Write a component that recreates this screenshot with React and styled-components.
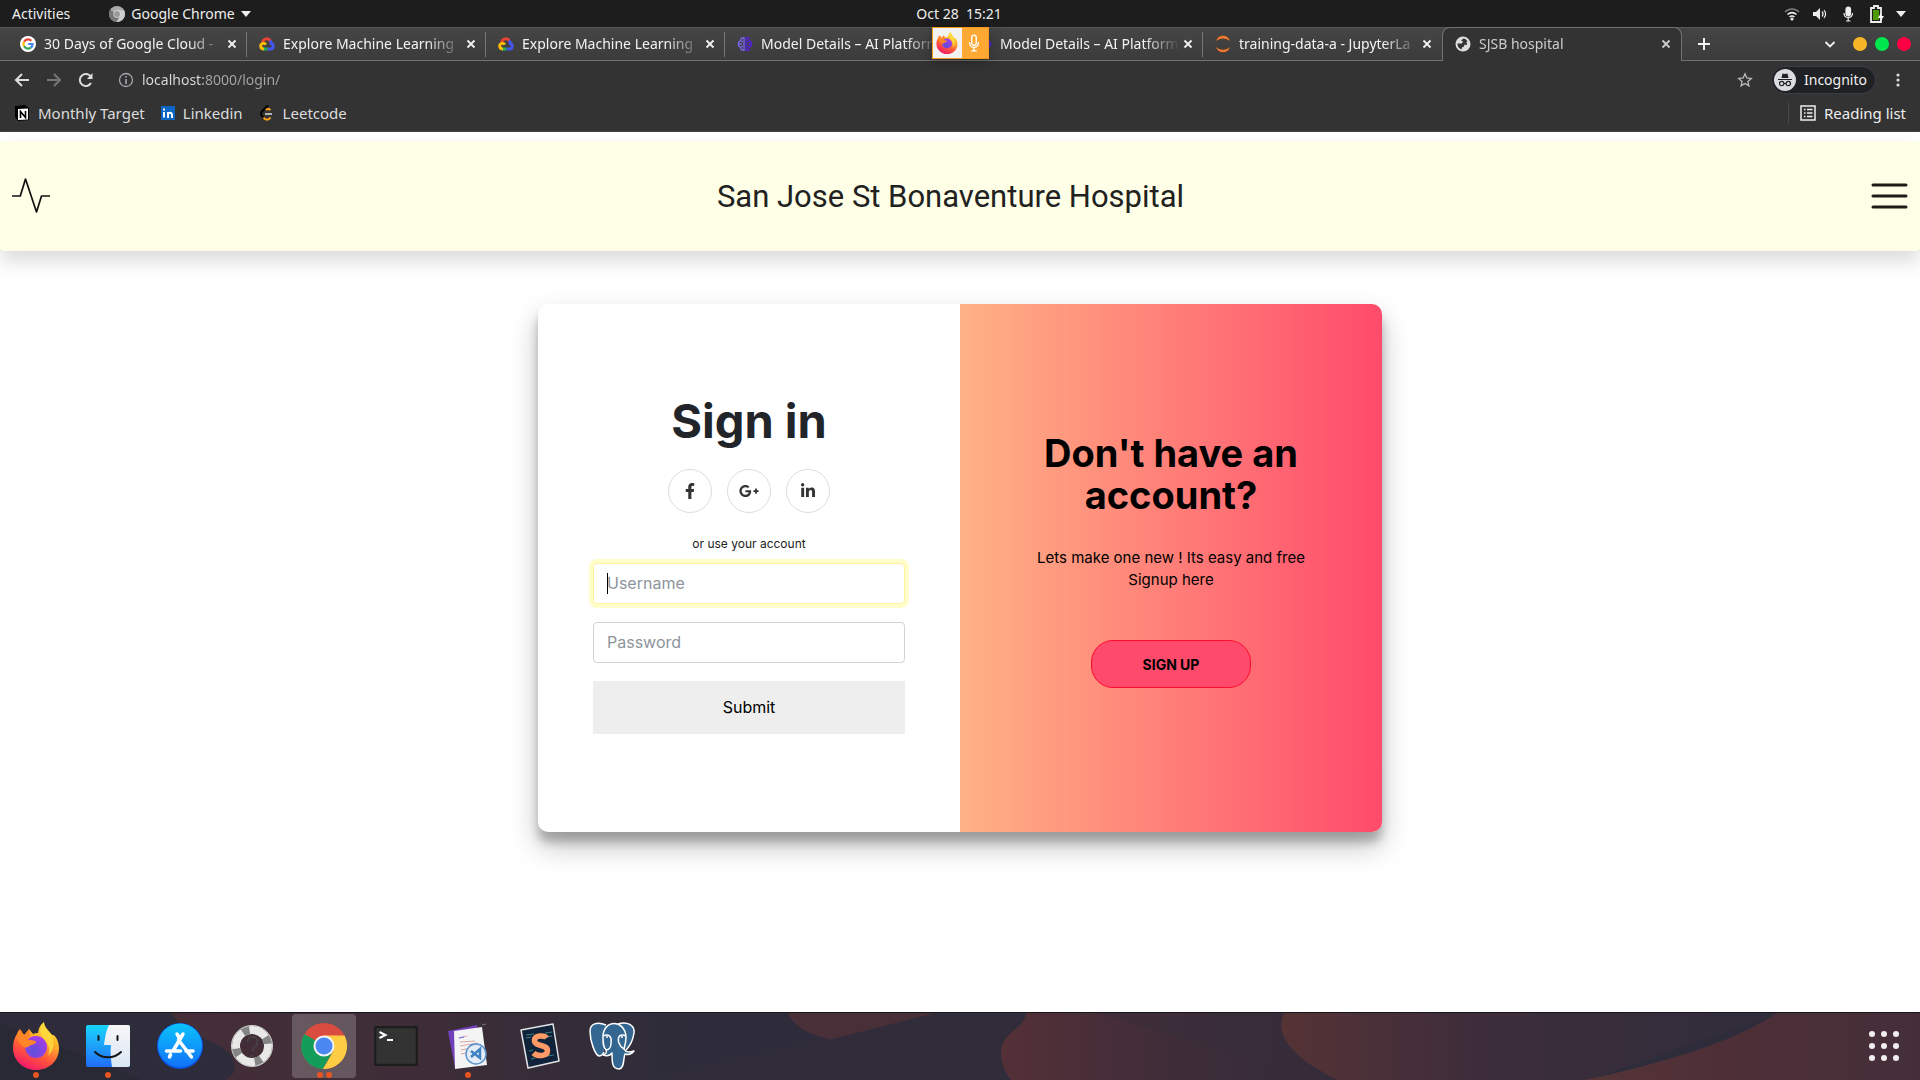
import React from "react";
import styled, { createGlobalStyle, css } from "styled-components";
import { FaFacebookF, FaGooglePlusG, FaLinkedinIn } from "react-icons/fa";

const uiFont = '"Noto Sans", "Open Sans", sans-serif';
const pageFont = 'Inter, "Liberation Sans", sans-serif';

const GlobalStyle = createGlobalStyle`
  *, *::before, *::after { box-sizing: border-box; }
  body { margin: 0; background: #fff; font-family: ${pageFont}; }
  button, input { font: inherit; }
  a { color: inherit; text-decoration: none; }
  h1, h2, p { margin: 0; }
`;

const Desktop = styled.div`
  min-height: 100vh;
  display: flex;
  flex-direction: column;
`;

/* ---------- system bar ---------- */
const SystemBar = styled.div`
  height: 27px;
  padding: 0 14px 0 12px;
  display: grid;
  grid-template-columns: 1fr auto 1fr;
  align-items: center;
  background: #1d1d1d;
  color: #eee;
  font: 14px/20px ${uiFont};
  white-space: pre;
`;
const BarGroup = styled.div`
  display: flex;
  align-items: center;
  justify-content: ${(p) => (p.$end ? "flex-end" : "flex-start")};
  gap: ${(p) => p.$gap}px;
`;
const BarButton = styled.button`
  display: flex;
  align-items: center;
  gap: 6px;
  padding: 0;
  border: 0;
  background: none;
  color: inherit;
`;
const Caret = styled.span`
  border: 5px solid transparent;
  border-top: 6px solid #eee;
  border-bottom: 0;
`;

/* ---------- browser tabs ---------- */
const TabStrip = styled.div`
  position: relative;
  height: 34px;
  padding-left: 8px;
  display: flex;
  background: linear-gradient(#454545, #3b3b3b);
  border-top: 1px solid #565656;
  box-shadow: inset 0 -1px #717171;
  font: 14px/20px ${uiFont};
  color: #f2f2f2;
`;
const TabBox = styled.div`
  flex: 0 1 239px;
  min-width: 0;
  display: flex;
  align-items: center;
  gap: 8px;
  padding: 0 7px 2px 12px;
  background: linear-gradient(#777, #777) right center / 1px 25px no-repeat;
  ${(p) => p.$last && css`background: none;`}
  ${(p) => p.$active && css`
    flex-basis: 240px;
    background: #333;
    border: 1px solid #717171;
    border-bottom: 0;
    border-radius: 8px 8px 0 0;
    color: #ccc;
    margin-top: -1px;
  `}
`;
const TabTitle = styled.span`
  flex: 1;
  min-width: 0;
  margin-right: -8px;
  overflow: hidden;
  white-space: nowrap;
  mask-image: linear-gradient(to right, #000 calc(100% - 36px), transparent);
`;
const IconButton = styled.button`
  display: grid;
  place-items: center;
  width: ${(p) => p.$size || 16}px;
  height: ${(p) => p.$size || 16}px;
  padding: 0;
  border: 0;
  background: none;
  color: inherit;
  flex: none;
`;
const NewTab = styled.div`
  display: flex;
  align-items: center;
  padding: 0 0 2px 14px;
  flex: 1;
`;
const WindowControls = styled.div`
  display: flex;
  align-items: center;
  gap: 12px;
  padding: 0 9px 2px 0;
`;
const WindowDots = styled.div`
  display: flex;
  gap: 8px;
`;
const WindowDot = styled.button`
  width: 14px;
  height: 14px;
  padding: 0;
  border: 0;
  border-radius: 50%;
  background: ${(p) => p.$color};
`;
const SharingBadge = styled.div`
  position: absolute;
  top: -1px;
  left: calc(50% - 28px);
  width: 57px;
  height: 32px;
  display: grid;
  grid-template-columns: 1fr 1fr;
  border: 1px solid #f69a1d;
  background: linear-gradient(to right, #f2f2f2 29px, #ffa834 29px);
  place-items: center;
  box-shadow: 0 3px 14px rgba(0, 0, 0, 0.3);
`;

/* ---------- toolbar and bookmarks ---------- */
const Chrome = styled.div`
  background: #333;
  color: #ddd;
  font: 14px/20px ${uiFont};
  border-bottom: 1px solid #453f42;
`;
const Toolbar = styled.div`
  height: 38px;
  display: flex;
  align-items: center;
  padding: 0 12px;
  gap: 12px;
`;
const AddressLabel = styled.label`
  display: flex;
  align-items: center;
  gap: 8px;
  flex: 1;
  margin-left: 10px;
  color: #a3a6aa;
`;
/* The host name is lighter than the rest of the address. */
const AddressInput = styled.input`
  flex: 1;
  min-width: 0;
  height: 22px;
  padding: 0 0 2px;
  border: 0;
  outline: 0;
  background: linear-gradient(to right, #ddd 61px, #a3a6aa 61px);
  background-clip: text;
  color: transparent;
`;
const Incognito = styled.button`
  height: 28px;
  margin-left: 4px;
  display: flex;
  align-items: center;
  gap: 8px;
  padding: 0 8px 0 2px;
  border: 1px solid #3b3e42;
  border-radius: 14px;
  background: #202124;
  color: #f0f0f0;
`;
const Bookmarks = styled.nav`
  height: 32px;
  display: flex;
  align-items: center;
  gap: 16px;
  padding: 0 14px 5px;
  font-size: 15px;
`;
const Bookmark = styled.a`
  display: flex;
  align-items: center;
  gap: 8px;
  ${(p) => p.$end && css`
    margin-left: auto;
    padding-left: 11px;
    border-left: 1px solid #4a4a4a;
    color: #eee;
  `}
`;

/* ---------- hospital page ---------- */
const Header = styled.header`
  height: 110px;
  margin-top: 9px;
  padding: 0 12px;
  display: flex;
  align-items: center;
  justify-content: space-between;
  background: #feffe6;
  border-radius: 4px;
  box-shadow: 0 10px 20px rgba(0, 0, 0, 0.15);
`;
const HospitalName = styled.h1`
  padding-top: 2px;
  font-family: Roboto, ${pageFont};
  font-size: 31px;
  line-height: 40px;
  font-weight: 400;
  color: #212121;
`;
const MenuButton = styled.button`
  display: flex;
  padding: 0 0 0 20px;
  border: 0;
  background: none;
`;
const Main = styled.main`
  flex: 1;
  padding: 53px 16px 0;
`;
const Card = styled.section`
  max-width: 844px;
  min-height: 528px;
  margin: 0 auto;
  display: grid;
  grid-template-columns: 1fr 1fr;
  overflow: hidden;
  border-radius: 10px;
  background: #fff;
  box-shadow: 0 14px 28px rgba(0, 0, 0, 0.25), 0 10px 10px rgba(0, 0, 0, 0.22);
`;
const SignIn = styled.form`
  padding: 0 55px 10px;
  display: flex;
  flex-direction: column;
  justify-content: center;
  align-items: center;
`;
const SignInTitle = styled.h2`
  font-size: 47px;
  line-height: 57px;
  font-weight: 700;
  color: #212529;
`;
const Socials = styled.div`
  display: flex;
  gap: 15px;
  margin: 20px 0;
`;
const Social = styled.a`
  width: 44px;
  height: 44px;
  display: grid;
  place-items: center;
  border: 1px solid #ddd;
  border-radius: 50%;
  color: #333;
`;
const Hint = styled.p`
  margin-bottom: 8px;
  font-size: 12px;
  line-height: 22px;
  color: #222;
`;
const Field = styled.label`
  position: relative;
  width: 100%;
  margin-bottom: 18px;
`;
const TextInput = styled.input`
  display: block;
  width: 100%;
  height: 41px;
  padding: 0 13px 2px;
  border: 1px solid ${(p) => (p.$active ? "#fff29b" : "#ced4da")};
  border-radius: 4px;
  box-shadow: ${(p) => (p.$active ? "0 0 0 4px #fffdca" : "none")};
  outline: 0;
  color: #495057;
  font-size: 16px;
  &::placeholder { color: #8d949b; opacity: 1; }
`;
const TextCaret = styled.span`
  position: absolute;
  left: 14px;
  top: 10px;
  width: 1px;
  height: 21px;
  background: #000;
`;
const Submit = styled.button`
  width: 100%;
  height: 53px;
  padding: 0 0 2px;
  border: 0;
  background: #eee;
  color: #000;
  font-size: 16px;
`;
const SignUpPanel = styled.div`
  padding: 0 40px 16px;
  display: flex;
  flex-direction: column;
  align-items: center;
  justify-content: center;
  text-align: center;
  color: #000;
  background: linear-gradient(to right, #ffb285, #ff4b6b);
`;
const SignUpTitle = styled.h2`
  max-width: 300px;
  font-size: 38px;
  line-height: 42px;
  font-weight: 700;
`;
const SignUpText = styled.p`
  max-width: 300px;
  margin: 31px 0 49px;
  font-size: 15px;
  line-height: 22px;
`;
const SignUpButton = styled.button`
  width: 160px;
  height: 48px;
  border: 1px solid #ff0a33;
  border-radius: 22px;
  background: #ff4b6b;
  color: #000;
  font-size: 14px;
  font-weight: 700;
`;

/* ---------- dock ---------- */
const Dock = styled.nav`
  position: relative;
  height: 68px;
  padding-bottom: 2px;
  display: flex;
  align-items: center;
  background: #2e2c3a;
  border-top: 1px solid #17161c;
  overflow: hidden;
`;
const Wallpaper = styled.svg`
  position: absolute;
  inset: 0;
  width: 100%;
  height: 100%;
`;
const DockItem = styled.button`
  position: relative;
  width: 64px;
  height: 64px;
  margin: 0 4px;
  padding: 0;
  display: grid;
  place-items: center;
  border: 0;
  border-radius: 4px;
  background: ${(p) => (p.$active ? "rgba(255,255,255,0.2)" : "none")};
  ${(p) => p.$end && css`margin-left: auto;`}
`;
const Dots = styled.span`
  position: absolute;
  left: 0;
  right: 0;
  bottom: 0;
  display: flex;
  justify-content: center;
  gap: 3px;
  i { width: 6px; height: 6px; border-radius: 50%; background: #e95420; }
`;

/* ---------- drawings ---------- */
const Stroke = ({ size = 16, w = 2, children, color = "currentColor" }) => (
  <svg width={size} height={size} viewBox="0 0 16 16" fill="none" stroke={color} strokeWidth={w}>{children}</svg>
);
const Close = () => <Stroke size={16} w={1.8}><path d="M4.5 4.5l7 7M11.5 4.5l-7 7" /></Stroke>;

const GoogleMark = () => (
  <svg width="16" height="16" viewBox="0 0 16 16">
    <circle cx="8" cy="8" r="8" fill="#fff" />
    <g fill="none" strokeWidth="2.2">
      <path d="M11.4 4.7A4.6 4.6 0 0 0 4 5.8" stroke="#ea4335" />
      <path d="M4 5.8a4.6 4.6 0 0 0 0 4.5" stroke="#fbbc05" />
      <path d="M4 10.3a4.6 4.6 0 0 0 6.8 1.3" stroke="#34a853" />
      <path d="M10.8 11.6A4.6 4.6 0 0 0 12.6 8H8.2" stroke="#4285f4" />
    </g>
  </svg>
);
const CloudMark = () => (
  <svg width="16" height="16" viewBox="0 0 16 16" fill="none" strokeWidth="3">
    <path d="M3.6 6.2C4.5 2.4 9.5 1.5 11.5 5" stroke="#ea4335" />
    <path d="M11 4.6c1 .9 1.2 2 1.2 3 2.6.4 3 5.4-.7 5.4H8.500" stroke="#4556f0" />
    <path d="M8.500 13H4.500" stroke="#20b557" />
    <path d="M5 13C1.500 13 .6 9 3.300 7.500c1.500-.8 3 .3 3.700 1" stroke="#fbbc05" />
  </svg>
);
const Brain = () => (
  <svg width="16" height="16" viewBox="0 0 16 16" fill="none" strokeWidth="1.300">
    <path d="M7 1v14M7 2L4.500 2 3.500 4.500l-2 2v3l2 2 1 2.500H7M3.500 4.500L6 6M1.500 8H5M3.500 11.500L6 10" stroke="#7668e8" />
    <path d="M9 1v14M9 2l2.500 0 1 2.500 2 2v3l-2 2-1 2.500H9M12.500 4.500L10 6M14.500 8H11M12.500 11.500L10 10" stroke="#5420e0" />
  </svg>
);
const Jupyter = () => (
  <svg width="16" height="18" viewBox="0 0 16 18" fill="#f37726">
    <path d="M1 6C3-1 13-1 15 6 11 2.500 5 2.500 1 6zM1 12c2 7 12 7 14 0-4 3.500-10 3.500-14 0z" />
  </svg>
);
const Globe = () => (
  <svg width="16" height="16" viewBox="0 0 16 16">
    <circle cx="8" cy="8" r="7.500" fill="#ddd" />
    <path d="M8.500 2.500L6 4.500l2 1-1 2H5l-2.500 0c-.3 3 1.500 5 4 6l.5-2 2-1 .5-2 2.500.5c.5-1 0-2-1-2.500l1.500-1c-1-2-2-2.500-3.500-3z" fill="#333" />
  </svg>
);
const FirefoxMark = ({ size, id }) => (
  <svg width={size} height={size} viewBox="0 0 48 48">
    <defs>
      <linearGradient id={`${id}-body`} x1=".8" y1="0" x2=".3" y2="1">
        <stop offset="0" stopColor="#ffe83a" /><stop offset=".35" stopColor="#ffb02a" />
        <stop offset=".65" stopColor="#ff5a38" /><stop offset="1" stopColor="#f5156c" />
      </linearGradient>
      <radialGradient id={`${id}-core`} cx=".4" cy=".7" r=".7">
        <stop offset="0" stopColor="#5e50d8" /><stop offset="1" stopColor="#a83bea" />
      </radialGradient>
    </defs>
    <path d="M32 0c0 5 4 8 8 13 4-1 7 8 7 13 0 13-10 22-23 22S1 38 1 26c0-5 1-10 4-14l2-2 1-2 4 5 4-3 1-3 4 5c2-1 3-1 5-1 1-5 2-8 6-11z" fill={`url(#${id}-body)`} />
    <circle cx="24" cy="25" r="11" fill={`url(#${id}-core)`} />
    <path d="M32 0c-4 6-5 11-1 16 5 5 8 10 5 18 8-7 5-15 4-21-4-5-8-8-8-13z" fill="#ffdc3e" opacity=".8" />
    <path d="M5 12c1-3 2-4 3-5l4 6 5-6 1 7-5 3 11 2c0 4-5 3-8 6-4 2-10-3-11-13z" fill="#ff8628" />
  </svg>
);
const Finder = () => (
  <svg width="44" height="42" viewBox="0 0 44 42">
    <defs>
      <linearGradient id="finder-l" x2="0" y2="1"><stop stopColor="#18d5fc" /><stop offset="1" stopColor="#226df6" /></linearGradient>
      <linearGradient id="finder-r" x2="0" y2="1"><stop stopColor="#f7f7f8" /><stop offset="1" stopColor="#dae6f3" /></linearGradient>
    </defs>
    <rect width="44" height="42" rx="2" fill="url(#finder-l)" />
    <path d="M23 0c-3 6-4 12-5 20h7c-1 8 0 15 1 22h16a2 2 0 0 0 2-2V2a2 2 0 0 0-2-2z" fill="url(#finder-r)" />
    <path d="M12.500 11v4M31.500 11v4M9 27c7 7 19 7 26 0" fill="none" stroke="#161616" strokeWidth="2" strokeLinecap="round" />
  </svg>
);
const AppStore = () => (
  <svg width="46" height="46" viewBox="0 0 46 46">
    <defs><linearGradient id="store" x2="0" y2="1"><stop stopColor="#0bc3fb" /><stop offset="1" stopColor="#1271f8" /></linearGradient></defs>
    <circle cx="23" cy="23" r="23" fill="#0752e8" />
    <circle cx="23" cy="22.500" r="22" fill="url(#store)" />
    <path d="M20 11l3 5M26 11l-10 17M21.500 17l13 17M9.500 28h14M29 28h7M13.500 31.500l-1 2.500" fill="none" stroke="#fff" strokeWidth="3.500" strokeLinecap="round" />
  </svg>
);
const HelpRing = () => (
  <svg width="44" height="44" viewBox="0 0 44 44" fill="none">
    <circle cx="22" cy="22" r="20.500" stroke="#d4d4d4" />
    <circle cx="22" cy="22" r="16" stroke="#e8e8e6" strokeWidth="8" />
    <circle cx="22" cy="22" r="16" stroke="#858585" strokeWidth="8" strokeDasharray="7 18.130" strokeDashoffset="10" />
    <path d="M17.500 18c0-7 10-7 10 0 0 5-5 4-5 9M22 31v2" stroke="#4a4648" strokeWidth="1.500" />
  </svg>
);
const ChromeMark = ({ size, grey }) => {
  const c = grey ? ["#aaa", "#777", "#ccc", "#999", "#ddd"] : ["#da4c40", "#139c5a", "#ffcd43", "#4a87f0", "#f2f2f2"];
  return (
    <svg width={size} height={size} viewBox="0 0 46 46">
      <circle cx="23" cy="23" r="23" fill={c[0]} />
      <path d="M3.500 11A23 23 0 0 0 22 46l10-18z" fill={c[1]} />
      <path d="M23 12.500h20.500A23 23 0 0 1 22 46l10.500-18z" fill={c[2]} />
      <circle cx="23" cy="23" r="10.500" fill={c[4]} />
      <circle cx="23" cy="23" r="8.500" fill={c[3]} />
    </svg>
  );
};
const Terminal = () => (
  <svg width="44" height="40" viewBox="0 0 44 40">
    <rect x="1" y="1" width="42" height="38" rx="1" fill="#333" stroke="#1d1d1d" strokeWidth="2.500" />
    <path d="M5.500 6l6 3-6 3M13 14h6" fill="none" stroke="#fff" strokeWidth="2" />
  </svg>
);
const CodePages = () => (
  <svg width="40" height="46" viewBox="0 0 40 46">
    <path d="M0 8l29-6 5 38-27 5z" fill="#7240b8" />
    <path d="M6 8l28-4 5 38-32 4z" fill="#f4f4f5" />
    <path d="M11 15l8-2M12 19l15-1M12 23l18-3M13 27l10-2M13 31l5-1" stroke="#d7a8a0" />
    <path d="M11 15l5-1M22 22l7-1" stroke="#6572e0" />
    <circle cx="28" cy="31" r="10" fill="#e4edf5" stroke="#5c94cc" strokeWidth="1.500" />
    <path d="M23 28l9 7V26l-9 8" fill="none" stroke="#3f82c4" strokeWidth="2.500" />
    <path d="M34 2l4-1" stroke="#777" />
  </svg>
);
const Sublime = () => (
  <svg width="42" height="46" viewBox="0 0 42 46">
    <path d="M2 7l32-6 6 37-31 7z" fill="#10233a" stroke="#e4e4e4" strokeWidth="1.500" strokeLinejoin="round" />
    <path d="M7 12l8-1M7 15l5-1M26 10l7-1M27 14l6-1M28 33l7-1M12 36l4-1M10 28l4-1" stroke="#3b817f" />
    <path d="M27.500 15c-2-3-12-3-12 2.500 0 6.500 13 3.500 13 10 0 6-10 6.500-14 2.500" fill="none" stroke="#ff9966" strokeWidth="5.500" />
  </svg>
);
const Elephant = () => (
  <svg width="46" height="48" viewBox="0 0 46 48" fill="#336791" stroke="#fff" strokeWidth="1.500" strokeLinejoin="round">
    <path d="M17 3C8-1 1 2 1 9c0 10 5 24 9 25 3 0 5-4 5-4M29 2c9-3 17 1 16 9-1 7-5 14-8 17" />
    <path d="M14 15c0-18 22-18 23 0 0 5-1 8-2 12 2 4 6 3 10 2-3 4-6 4-9 3-2 4 0 14-6 15-7 0-7-7-7-16-2 3-6 3-9 2 3-1 4-2 3-5-3-3-3-7-3-13z" />
    <path d="M14 14c6-3 9 1 8 7 0 4-2 7-5 7M37 14c-6-3-9 1-7 7 1 3 3 5 5 6" fill="none" />
    <path d="M17 15h2M32 15h2" />
  </svg>
);
const AppGrid = () => (
  <svg width="32" height="32" viewBox="0 0 32 32" fill="#f0eeee">
    {[4, 16, 28].map((y) => [4, 16, 28].map((x) => <circle key={`${x}-${y}`} cx={x} cy={y} r="3" />))}
  </svg>
);

const tabs = [
  { title: "30 Days of Google Cloud -", icon: <GoogleMark /> },
  { title: "Explore Machine Learning", icon: <CloudMark /> },
  { title: "Explore Machine Learning", icon: <CloudMark /> },
  { title: "Model Details – AI Platform", icon: <Brain /> },
  { title: "Model Details – AI Platform", icon: <Brain /> },
  { title: "training-data-a - JupyterLa", icon: <Jupyter /> },
  { title: "SJSB hospital", icon: <Globe />, active: true },
];

const dockItems = [
  { name: "Firefox", icon: <FirefoxMark size={48} id="dock-fox" />, dots: 1 },
  { name: "Files", icon: <Finder />, dots: 1 },
  { name: "Software", icon: <AppStore />, dots: 0 },
  { name: "Help", icon: <HelpRing />, dots: 0 },
  { name: "Google Chrome", icon: <ChromeMark size={46} />, dots: 2, active: true },
  { name: "Terminal", icon: <Terminal />, dots: 0 },
  { name: "Code", icon: <CodePages />, dots: 1 },
  { name: "Sublime Text", icon: <Sublime />, dots: 0 },
  { name: "PostgreSQL", icon: <Elephant />, dots: 0 },
];

const StatusIcons = () => (
  <BarGroup $end $gap={12}>
    <Stroke w={1.5}><path d="M1 6c4-4 10-4 14 0" opacity=".45" /><path d="M3.500 8.500c3-2.500 6-2.500 9 0M5.500 11c2-1.500 3-1.500 5 0" /><circle cx="8" cy="13" r=".8" fill="currentColor" /></Stroke>
    <Stroke w={1.2}><path d="M1 6h3l4-4v12l-4-4H1z" fill="currentColor" stroke="none" /><path d="M10 5.500c1.300 1.500 1.300 3.500 0 5M12 4c2 2.500 2 5.500 0 8" /></Stroke>
    <Stroke w={1.2}><rect x="6" y="1" width="4.500" height="9" rx="2.200" fill="currentColor" /><path d="M4 7c0 6 8.500 6 8.500 0M8.200 12v3M6 15h4.500" /></Stroke>
    <svg width="16" height="18" viewBox="0 0 16 18"><path d="M6 1h4v2h3v14H3V3h3z" fill="none" stroke="#eee" strokeWidth="1.800" /><path d="M5 5h6v10H5z" fill="#4e9a06" /><path d="M13 8l-3 5h3l-1 4 4-6h-3z" fill="#fff" /></svg>
    <Caret />
  </BarGroup>
);

export default function App() {
  return (
    <Desktop>
      <GlobalStyle />
      <SystemBar>
        <BarGroup $gap={39}>
          <BarButton>Activities</BarButton>
          <BarButton><ChromeMark size={16} grey />Google Chrome<Caret /></BarButton>
        </BarGroup>
        <BarButton>Oct 28  15:21</BarButton>
        <StatusIcons />
      </SystemBar>

      <TabStrip>
        {tabs.map((tab, i) => (
          <TabBox key={i} $active={tab.active} $last={i === tabs.length - 2}>
            {tab.icon}
            <TabTitle>{tab.title}</TabTitle>
            <IconButton aria-label="Close tab"><Close /></IconButton>
          </TabBox>
        ))}
        <NewTab>
          <IconButton aria-label="New tab"><Stroke w={2}><path d="M8 2v12M2 8h12" /></Stroke></IconButton>
        </NewTab>
        <WindowControls>
          <IconButton $size={22} aria-label="Search tabs"><Stroke w={1.8}><path d="M3.500 6L8 10.500 12.500 6" /></Stroke></IconButton>
          <WindowDots>
            <WindowDot aria-label="Minimise" $color="#f6b626" />
            <WindowDot aria-label="Maximise" $color="#00e64d" />
            <WindowDot aria-label="Close window" $color="#ff0044" />
          </WindowDots>
        </WindowControls>
        <SharingBadge>
          <FirefoxMark size={22} id="badge-fox" />
          <Stroke w={1.2} size={18} color="#fff"><rect x="6" y="1" width="4" height="9" rx="2" /><path d="M4 7c0 6.500 8 6.500 8 0M8 12v3M5.500 15h5" /></Stroke>
        </SharingBadge>
      </TabStrip>

      <Chrome>
        <Toolbar>
          <IconButton $size={20} aria-label="Back"><Stroke><path d="M15 8H2M8 2L2 8l6 6" /></Stroke></IconButton>
          <IconButton $size={20} aria-label="Forward"><Stroke color="#777"><path d="M1 8h13M8 2l6 6-6 6" /></Stroke></IconButton>
          <IconButton $size={20} aria-label="Reload"><Stroke><path d="M13 11a6 6 0 1 1 0-6" /><path d="M14.500 1v6H9z" fill="currentColor" stroke="none" /></Stroke></IconButton>
          <AddressLabel>
            <Stroke size={16} w={1.3}><circle cx="8" cy="8" r="6.500" /><path d="M8 7v5M8 4v1.500" strokeWidth="1.600" /></Stroke>
            <AddressInput type="text" aria-label="Address" defaultValue="localhost:8000/login/" />
          </AddressLabel>
          <IconButton $size={20} aria-label="Bookmark this page"><Stroke w={1.3} color="#bbb"><path d="M8 1.800l1.800 4.200 4.500.4-3.400 3 1 4.400L8 11.500l-3.900 2.300 1-4.400-3.400-3 4.500-.4z" /></Stroke></IconButton>
          <Incognito>
            <svg width="22" height="22" viewBox="0 0 22 22"><circle cx="11" cy="11" r="11" fill="#dadce0" /><path d="M7.500 9l1-4.500 2.500.6 2.500-.6 1 4.500z" fill="#222" /><g fill="none" stroke="#222" strokeWidth="1.200"><path d="M4 10.500h14M10 14.500h2" /><circle cx="7.700" cy="14.500" r="2.200" /><circle cx="14.300" cy="14.500" r="2.200" /></g></svg>
            Incognito
          </Incognito>
          <IconButton $size={20} aria-label="Browser menu"><svg width="16" height="16" fill="#ddd"><circle cx="8" cy="3" r="1.600" /><circle cx="8" cy="8" r="1.600" /><circle cx="8" cy="13" r="1.600" /></svg></IconButton>
        </Toolbar>
        <Bookmarks>
          <Bookmark href="#notion">
            <svg width="16" height="16" viewBox="0 0 16 16"><path d="M1 1l10-1 4 3v12l-11 1-3-4z" fill="#000" /><path d="M4 4l10-.5v11L4 15z" fill="#fff" /><path d="M6.500 13V6.500l5 6V6" fill="none" stroke="#000" strokeWidth="1.600" /></svg>
            Monthly Target
          </Bookmark>
          <Bookmark href="#linkedin">
            <svg width="14" height="14" viewBox="0 0 14 14"><path fill="#0a66c2" d="M0 0h14v14H0z" /><path d="M3 6v5.500M7 12V6M7 8.500c.5-2.500 4-2.500 4 .5v3M3 2.500v2" fill="none" stroke="#fff" strokeWidth="1.900" /></svg>
            Linkedin
          </Bookmark>
          <Bookmark href="#leetcode">
            <svg width="16" height="16" viewBox="0 0 16 16" fill="none" strokeWidth="2"><path d="M9 0L3 6.500c-1.300 1.500-1.300 3 0 4.500l2 2" stroke="#000" /><path d="M4.500 12.500c2 3 5 3 7 0M7 5c1.500-1.500 3-1.500 4.500 0" stroke="#ffa116" /><path d="M6 9h7" stroke="#b3b3b3" /></svg>
            Leetcode
          </Bookmark>
          <Bookmark $end href="#reading-list">
            <Stroke w={1.5}><path d="M1 1h14v14H1zM4 4.500h1.500M7 4.500h5.500M4 8h1.500M7 8h5.500M4 11.500h1.500M7 11.500h5.500" /></Stroke>
            Reading list
          </Bookmark>
        </Bookmarks>
      </Chrome>

      <Header>
        <svg width="38" height="36" viewBox="0 0 38 36" fill="none" stroke="#111" strokeWidth="1.700" strokeLinejoin="round"><path d="M0 18h8.300L13.500 1l11 33 5-16H38" /></svg>
        <HospitalName>San Jose St Bonaventure Hospital</HospitalName>
        <MenuButton aria-label="Menu">
          <svg width="37" height="26" viewBox="0 0 37 26" stroke="#1c1d17" strokeWidth="3" strokeLinecap="round"><path d="M2 2h33M2 13h33M2 24h33" /></svg>
        </MenuButton>
      </Header>

      <Main>
        <Card>
          <SignIn onSubmit={(e) => e.preventDefault()}>
            <SignInTitle>Sign in</SignInTitle>
            <Socials>
              <Social href="#facebook" aria-label="Facebook"><FaFacebookF size={16} /></Social>
              <Social href="#google" aria-label="Google Plus"><FaGooglePlusG size={20} /></Social>
              <Social href="#linkedin-login" aria-label="LinkedIn"><FaLinkedinIn size={16} /></Social>
            </Socials>
            <Hint>or use your account</Hint>
            <Field>
              <TextInput $active type="text" placeholder="Username" aria-label="Username" />
              <TextCaret />
            </Field>
            <Field>
              <TextInput type="password" placeholder="Password" aria-label="Password" />
            </Field>
            <Submit type="submit">Submit</Submit>
          </SignIn>
          <SignUpPanel>
            <SignUpTitle>Don't have an account?</SignUpTitle>
            <SignUpText>Lets make one new ! Its easy and free Signup here</SignUpText>
            <SignUpButton type="button">SIGN UP</SignUpButton>
          </SignUpPanel>
        </Card>
      </Main>

      <Dock>
        <Wallpaper viewBox="0 0 1920 68" preserveAspectRatio="none">
          <defs>
            <linearGradient id="w1"><stop stopColor="#452e37" /><stop offset=".5" stopColor="#3d2d38" /><stop offset="1" stopColor="#2d2c39" /></linearGradient>
            <linearGradient id="w2"><stop stopColor="#543037" /><stop offset=".5" stopColor="#3e2d39" /><stop offset="1" stopColor="#332b39" /></linearGradient>
            <linearGradient id="w3"><stop stopColor="#553335" /><stop offset=".4" stopColor="#3d2d3b" /><stop offset="1" stopColor="#302d3b" /></linearGradient>
            <linearGradient id="w4"><stop stopColor="#563537" /><stop offset=".4" stopColor="#4e2f37" /><stop offset="1" stopColor="#442f39" /></linearGradient>
          </defs>
          <path d="M0 10c40 18 90 35 143 58H0z" fill="#292935" />
          <path d="M172 0c12 30 63 25 63 56 0 5-5 9-10 12h465V0z" fill="url(#w1)" />
          <path d="M690 57L935 0h90v68H640z" fill="#302c3a" />
          <path d="M788 0c4 12 20 22 43 27L935 0z" fill="#492f38" />
          <path d="M1026 0c0 15-25 20-25 40 0 10 4 20 10 28h340V0z" fill="url(#w2)" />
          <path d="M1096 0l154 46 30 22h120V0z" fill="#372c3a" opacity=".4" />
          <path d="M1284 0c-12 25 16 50 54 68h250L1780 0z" fill="url(#w3)" />
          <path d="M1777 0c-40 28-110 50-192 68h335V0z" fill="url(#w4)" />
        </Wallpaper>
        {dockItems.map((item) => (
          <DockItem key={item.name} aria-label={item.name} $active={item.active}>
            {item.icon}
            <Dots>{Array.from({ length: item.dots }, (_, i) => <i key={i} />)}</Dots>
          </DockItem>
        ))}
        <DockItem $end aria-label="Show applications"><AppGrid /></DockItem>
      </Dock>
    </Desktop>
  );
}
